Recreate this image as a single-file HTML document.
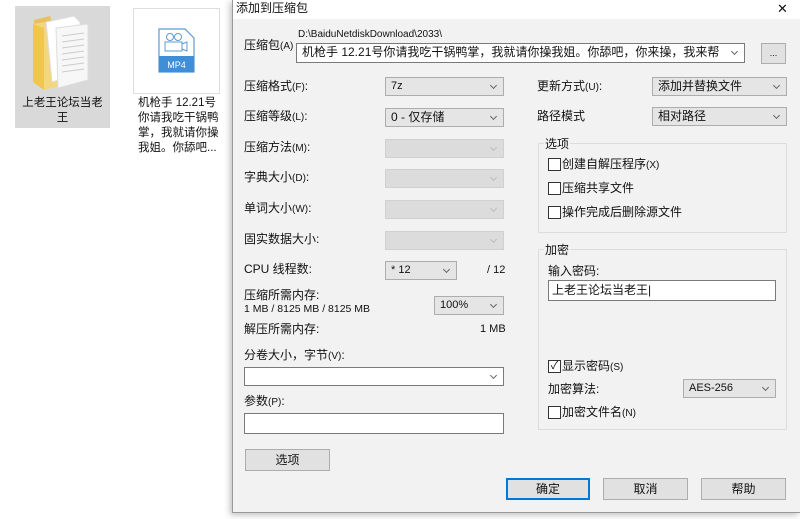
<!DOCTYPE html>
<html><head><meta charset="utf-8"><style>
*{margin:0;padding:0;box-sizing:border-box}
body{width:800px;height:519px;background:#fff;position:relative;overflow:hidden;font-family:"Liberation Sans","Noto Sans CJK SC",sans-serif;font-size:11px;color:#111}
.a{position:absolute;white-space:nowrap}
.l{font-size:12px;line-height:14px}
.l span{font-size:10px}
.dlg{position:absolute;left:232px;top:0;width:568px;height:513px;background:#f2f2f2;border-left:1px solid #999;border-bottom:1px solid #999;box-shadow:-2px 2px 6px rgba(0,0,0,.25)}
.tb{position:absolute;left:233px;top:0;width:567px;height:19px;background:#fff}
.cb{position:absolute;height:19px;background:#e5e5e5;border:1px solid #adadad;padding-left:5px;line-height:16px}
.cb.d{background:#dcdcdc;border-color:#d0d0d0}
.cb.w{background:#fff;border-color:#7a7a7a}
.cb::after{content:"";position:absolute;right:7px;top:5px;width:4px;height:4px;border-right:1px solid #666;border-bottom:1px solid #666;transform:rotate(45deg)}
.cb.d::after{border-color:#bbb}
.in{position:absolute;background:#fff;border:1px solid #7a7a7a}
.bt{position:absolute;background:#e1e1e1;border:1px solid #adadad;text-align:center;line-height:19px}
.gb{position:absolute;border:1px solid #dcdcdc}
.ck{position:absolute;width:13px;height:13px;border:1px solid #333;background:#fff}
</style></head><body>
<div class="a" style="left:15px;top:6px;width:95px;height:122px;background:#d9d9d9"></div>
<svg class="a" style="left:30px;top:12px" width="62" height="78" viewBox="0 0 62 78">
<path d="M4 8 L20 4 L22 10 L4 14 Z" fill="#e8c15c"/>
<path d="M3 12 L30 8 L30 74 L14 78 L3 70 Z" fill="#f3d77e"/>
<path d="M16 10 L44 4 L50 10 L50 62 L22 70 Z" fill="#fff" stroke="#ddd"/>
<path d="M26 16 L58 12 L58 68 L28 76 Z" fill="#f7f7f7" stroke="#ddd"/>
<g stroke="#ccc"><line x1="32" y1="24" x2="54" y2="21"/><line x1="32" y1="30" x2="54" y2="27"/><line x1="32" y1="36" x2="54" y2="33"/><line x1="32" y1="42" x2="54" y2="39"/><line x1="32" y1="48" x2="54" y2="45"/><line x1="32" y1="54" x2="54" y2="51"/><line x1="32" y1="60" x2="54" y2="57"/></g>
<path d="M3 12 L14 16 L14 78 L3 70 Z" fill="#f0c64f"/>
</svg>
<div class="a" style="left:15px;top:96px;width:95px;text-align:center;font-size:11.5px;line-height:15px;white-space:normal">上老王论坛当老<br>王</div>
<div class="a" style="left:133px;top:8px;width:87px;height:86px;background:#fff;border:1px solid #ddd"></div>
<svg class="a" style="left:158px;top:28px" width="37" height="45" viewBox="0 0 37 45">
<path d="M1 1 H27 L36 10 V44 H1 Z" fill="#fff" stroke="#5b9bd5" stroke-width="1.2"/>
<rect x="1" y="28" width="35" height="16" fill="#3f8fd8"/>
<text x="18.5" y="40" font-size="9" fill="#fff" text-anchor="middle" font-family="Liberation Sans">MP4</text>
<circle cx="12" cy="9" r="3.5" fill="none" stroke="#5b9bd5"/><circle cx="20" cy="9" r="3.5" fill="none" stroke="#5b9bd5"/>
<rect x="7" y="14" width="17" height="9" fill="none" stroke="#5b9bd5"/><path d="M24 16 L29 14 V23 L24 21" fill="none" stroke="#5b9bd5"/>
</svg>
<div class="a" style="left:138px;top:96px;font-size:11.5px;line-height:15px;white-space:normal;width:85px">机枪手 12.21号<br>你请我吃干锅鸭<br>掌，我就请你操<br>我姐。你舔吧...</div>

<div class="dlg"></div><div class="tb"></div>
<div class="a" style="left:236px;top:0;font-size:12px;line-height:16px">添加到压缩包</div>
<div class="a" style="left:777px;top:1px;font-size:13px">✕</div>
<div class="a l" style="left:244px;top:38px">压缩包<span>(A)</span></div>
<div class="a" style="left:298px;top:29px;font-size:10px">D:\BaiduNetdiskDownload\2033\</div>
<div class="cb w" style="left:296px;top:43px;width:449px;height:20px;font-size:12px;line-height:17px;overflow:hidden;padding-right:20px">机枪手 12.21号你请我吃干锅鸭掌，我就请你操我姐。你舔吧，你来操，我来帮你们舔，[</div>
<div class="bt" style="left:761px;top:43px;width:25px;height:21px;font-size:9px">...</div>

<div class="a l" style="left:244px;top:79px">压缩格式<span>(F)</span>:</div>
<div class="a l" style="left:244px;top:109px">压缩等级<span>(L)</span>:</div>
<div class="a l" style="left:244px;top:140px">压缩方法<span>(M)</span>:</div>
<div class="a l" style="left:244px;top:170px">字典大小<span>(D)</span>:</div>
<div class="a l" style="left:244px;top:201px">单词大小<span>(W)</span>:</div>
<div class="a l" style="left:244px;top:232px">固实数据大小:</div>
<div class="a l" style="left:244px;top:262px">CPU 线程数:</div>
<div class="a l" style="left:244px;top:288px">压缩所需内存:</div>
<div class="a" style="left:244px;top:303px;font-size:10.5px">1 MB / 8125 MB / 8125 MB</div>
<div class="a l" style="left:244px;top:322px">解压所需内存:</div>
<div class="a" style="left:480px;top:323px;font-size:11px">1 MB</div>
<div class="a l" style="left:244px;top:348px">分卷大小，字节<span>(V)</span>:</div>
<div class="a l" style="left:244px;top:394px">参数<span>(P)</span>:</div>

<div class="cb" style="left:385px;top:77px;width:119px">7z</div>
<div class="cb" style="left:385px;top:108px;width:119px;font-size:12px">0 - 仅存储</div>
<div class="cb d" style="left:385px;top:139px;width:119px"></div>
<div class="cb d" style="left:385px;top:169px;width:119px"></div>
<div class="cb d" style="left:385px;top:200px;width:119px"></div>
<div class="cb d" style="left:385px;top:231px;width:119px"></div>
<div class="cb" style="left:385px;top:261px;width:72px">* 12</div>
<div class="a" style="left:487px;top:264px;font-size:11px">/ 12</div>
<div class="cb" style="left:434px;top:296px;width:70px">100%</div>
<div class="cb w" style="left:244px;top:367px;width:260px"></div>
<div class="in" style="left:244px;top:413px;width:260px;height:21px"></div>
<div class="bt" style="left:245px;top:449px;width:85px;height:22px;font-size:12px;line-height:20px">选项</div>

<div class="a l" style="left:537px;top:79px">更新方式<span>(U)</span>:</div>
<div class="a l" style="left:537px;top:109px">路径模式</div>
<div class="cb" style="left:652px;top:77px;width:135px;font-size:12px">添加并替换文件</div>
<div class="cb" style="left:652px;top:107px;width:135px;font-size:12px">相对路径</div>

<div class="gb" style="left:538px;top:143px;width:249px;height:90px"></div>
<div class="a l" style="left:544px;top:137px;background:#f2f2f2;padding:0 1px">选项</div>
<div class="ck" style="left:548px;top:158px"></div><div class="a l" style="left:562px;top:157px">创建自解压程序<span>(X)</span></div>
<div class="ck" style="left:548px;top:182px"></div><div class="a l" style="left:562px;top:181px">压缩共享文件</div>
<div class="ck" style="left:548px;top:206px"></div><div class="a l" style="left:562px;top:205px">操作完成后删除源文件</div>

<div class="gb" style="left:538px;top:249px;width:249px;height:181px"></div>
<div class="a l" style="left:544px;top:243px;background:#f2f2f2;padding:0 1px">加密</div>
<div class="a l" style="left:548px;top:264px">输入密码:</div>
<div class="in" style="left:548px;top:280px;width:228px;height:21px;font-size:12px;line-height:18px;padding-left:3px">上老王论坛当老王|</div>
<div class="ck" style="left:548px;top:360px;font-size:11px;line-height:10px;text-align:center">✓</div><div class="a l" style="left:562px;top:359px">显示密码<span>(S)</span></div>
<div class="a l" style="left:548px;top:382px">加密算法:</div>
<div class="cb" style="left:683px;top:379px;width:93px">AES-256</div>
<div class="ck" style="left:548px;top:406px"></div><div class="a l" style="left:562px;top:405px">加密文件名<span>(N)</span></div>

<div class="bt" style="left:506px;top:478px;width:84px;height:22px;border:2px solid #0078d7;line-height:18px;font-size:12px">确定</div>
<div class="bt" style="left:603px;top:478px;width:85px;height:22px;font-size:12px;line-height:20px">取消</div>
<div class="bt" style="left:701px;top:478px;width:85px;height:22px;font-size:12px;line-height:20px">帮助</div>
</body></html>
